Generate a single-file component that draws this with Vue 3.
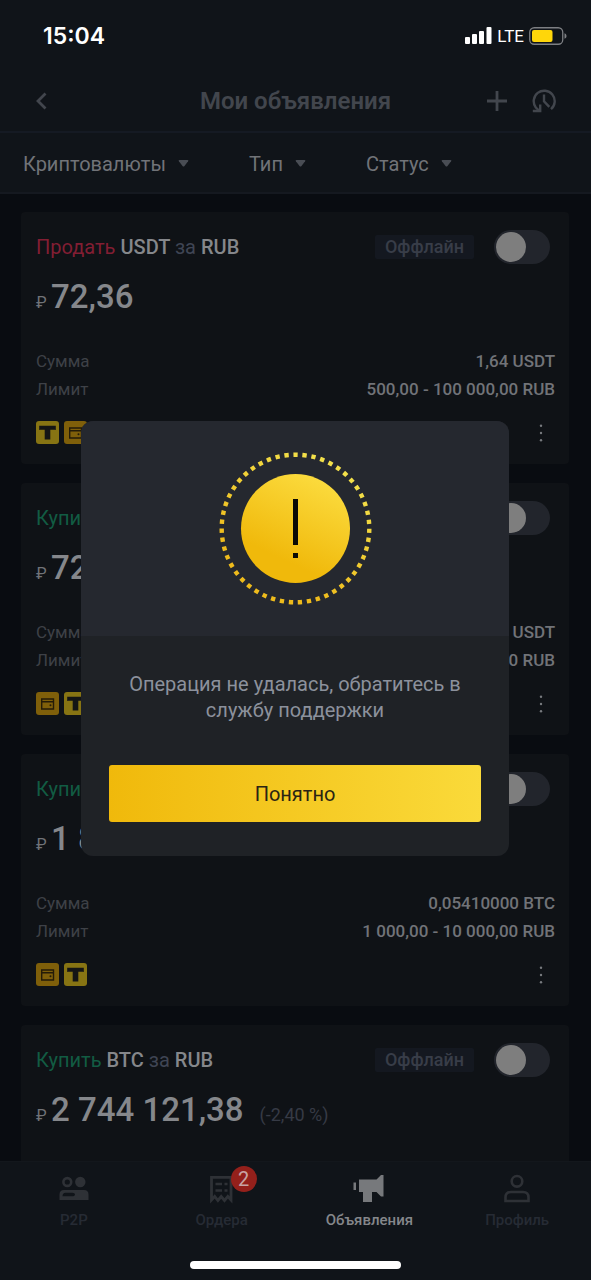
<script setup>
import { ref } from 'vue'

const filters = ['Криптовалюты', 'Тип', 'Статус']

const ads = ref([
  { id: 1, side: 'sell', action: 'Продать', coin: 'USDT', fiat: 'RUB', price: '72,36', amount: '1,64 USDT', limit: '500,00 - 100 000,00 RUB', pays: ['bank', 'wallet'], online: false },
  { id: 2, side: 'buy', action: 'Купить', coin: 'USDT', fiat: 'RUB', price: '72,36', amount: '1,64 USDT', limit: '500,00 - 100 000,00 RUB', pays: ['wallet', 'bank'], online: false },
  { id: 3, side: 'buy', action: 'Купить', coin: 'BTC', fiat: 'RUB', price: '1 850 000,00', amount: '0,05410000 BTC', limit: '1 000,00 - 10 000,00 RUB', pays: ['wallet', 'bank'], online: false },
  { id: 4, side: 'buy', action: 'Купить', coin: 'BTC', fiat: 'RUB', price: '2 744 121,38', diff: '(-2,40 %)', online: false },
])

const tabs = [
  { id: 'p2p', label: 'P2P' },
  { id: 'orders', label: 'Ордера', badge: 2 },
  { id: 'ads', label: 'Объявления', active: true },
  { id: 'profile', label: 'Профиль' },
]

const dialogOpen = ref(true)
</script>

<template>
  <div class="screen">
    <div class="status">
      <span class="clock">15:04</span>
      <div class="signals">
        <svg width="27" height="17" viewBox="0 0 27 17" fill="#fff" aria-hidden="true">
          <rect x="0" y="10" width="5" height="7" rx="1" />
          <rect x="7" y="7" width="5" height="10" rx="1" />
          <rect x="14" y="4" width="5" height="13" rx="1" />
          <rect x="21.500" y="0" width="5" height="17" rx="1" />
        </svg>
        <span class="net">LTE</span>
        <svg width="38" height="18" viewBox="0 0 38 18" aria-hidden="true">
          <rect x="0.750" y="0.750" width="33" height="16.500" rx="4.500" fill="none" stroke="#7d7f83" stroke-width="1.300" />
          <rect x="3" y="3" width="20.500" height="12" rx="2" fill="#ffd60a" />
          <path d="M35.500 6.200v5.600c1.300-.5 2-1.500 2-2.800s-.7-2.300-2-2.800z" fill="#7d7f83" />
        </svg>
      </div>
    </div>

    <header class="topbar">
      <button class="icon-btn" type="button" aria-label="Назад">
        <svg width="12" height="18" viewBox="0 0 12 18" fill="none" stroke="#42464d" stroke-width="2.800" aria-hidden="true">
          <path d="M10.500 1.500 3 9l7.500 7.500" />
        </svg>
      </button>
      <h1>Мои объявления</h1>
      <div class="tools">
        <button class="icon-btn" type="button" aria-label="Добавить">
          <svg width="22" height="22" viewBox="0 0 22 22" fill="none" stroke="#42464d" stroke-width="2.800" aria-hidden="true">
            <path d="M11 1v20M1 11h20" />
          </svg>
        </button>
        <button class="icon-btn" type="button" aria-label="История">
          <svg width="24" height="24" viewBox="0 0 24 24" fill="none" stroke="#42464d" stroke-width="2.400" aria-hidden="true">
            <path d="M19 20.200A10.500 10.500 0 1 0 3.800 18.500L7.500 22" />
            <path d="M8.200 15.500v6.500H.8" />
            <path d="M12 5.500v6.800l5.300 5.500" />
          </svg>
        </button>
      </div>
    </header>

    <div class="filters">
      <label v-for="name in filters" :key="name" class="filter">
        <select :aria-label="name">
          <option>{{ name }}</option>
        </select>
        <svg width="11" height="7" viewBox="0 0 11 7" aria-hidden="true"><path d="M1.500 0h8q1.500 0 .6 1.300L6.500 6q-1 1-2 0L.9 1.300Q0 0 1.500 0z" fill="#494d54" /></svg>
      </label>
    </div>

    <main class="list">
      <article v-for="ad in ads" :key="ad.id" class="card">
        <div class="head">
          <h2><span :class="ad.side">{{ ad.action }}</span> {{ ad.coin }} <span class="for">за</span> {{ ad.fiat }}</h2>
          <span class="state">Оффлайн</span>
          <input v-model="ad.online" class="switch" type="checkbox" role="switch" :aria-label="`${ad.action} ${ad.coin}`" />
        </div>
        <div class="price">
          <span class="cur">₽</span>
          <strong>{{ ad.price }}</strong>
          <span v-if="ad.diff" class="diff">{{ ad.diff }}</span>
        </div>
        <template v-if="ad.amount">
          <dl>
            <div><dt>Сумма</dt><dd>{{ ad.amount }}</dd></div>
            <div><dt>Лимит</dt><dd>{{ ad.limit }}</dd></div>
          </dl>
          <div class="foot">
            <template v-for="pay in ad.pays" :key="pay">
              <svg v-if="pay === 'bank'" width="23" height="23" viewBox="0 0 23 23" aria-hidden="true">
                <rect width="23" height="23" rx="3" fill="#877413" />
                <path d="M3.200 4.800h16.600v4.300l-1.200-.3H14.300v9.700H8.700V8.800H4.400l-1.200.3z" fill="#141515" />
              </svg>
              <svg v-else width="23" height="23" viewBox="0 0 23 23" aria-hidden="true">
                <rect width="23" height="23" rx="3" fill="#7f5f0a" />
                <path d="M5.700 7h11.800v10H5.700zM5.700 9.700h11.800" fill="none" stroke="#241b08" stroke-width="1.400" />
                <circle cx="14.500" cy="13.200" r="1" fill="#241b08" />
              </svg>
            </template>
            <button class="more" type="button" aria-label="Ещё">
              <svg width="4" height="18" viewBox="0 0 4 18" fill="#777a7e" aria-hidden="true">
                <circle cx="2" cy="1.700" r="1.200" /><circle cx="2" cy="9" r="1.200" /><circle cx="2" cy="16.300" r="1.200" />
              </svg>
            </button>
          </div>
        </template>
      </article>
    </main>

    <nav class="tabs">
      <a v-for="tab in tabs" :key="tab.id" :href="`#${tab.id}`" :class="{ active: tab.active }">
        <span class="glyph">
          <svg v-if="tab.id === 'p2p'" width="30" height="30" viewBox="0 0 30 30" fill="currentColor" aria-hidden="true">
            <circle cx="8.300" cy="8" r="3.900" fill="none" stroke="currentColor" stroke-width="2.600" />
            <circle cx="21.300" cy="8" r="5.200" />
            <path fill-rule="evenodd" d="M5 16h20q4.500 0 4.500 4.500V26H.5v-5.500Q.5 16 5 16zM6.500 18.800q-3 0-3 3.500h9.500q3 0 3-1.800 0-1.700-2.500-1.700z" />
          </svg>
          <svg v-else-if="tab.id === 'orders'" width="30" height="30" viewBox="0 0 30 30" fill="none" stroke="currentColor" stroke-width="2.800" aria-hidden="true">
            <path d="M4.500 26V3.400H24V26l-3.200-3.500-3.300 4-3.300-4-3.300 4-3.200-4z" />
            <path d="M8.500 10h6.500M8.500 16.500h6.500M17.500 10h3M17.500 16.500h3" stroke-width="2.400" />
          </svg>
          <svg v-else-if="tab.id === 'ads'" width="32" height="30" viewBox="0 0 32 30" fill="currentColor" aria-hidden="true">
            <path d="M.5 8.500H3V16H.5zM6 5.500h17.500L28 1h2.500v21.500H28L23.500 18H19v10h-9V18H6z" />
          </svg>
          <svg v-else width="30" height="30" viewBox="0 0 30 30" fill="none" stroke="currentColor" stroke-width="2.600" aria-hidden="true">
            <circle cx="15" cy="7.300" r="5.300" />
            <path d="M3.500 27v-3.500q0-5.500 5.500-5.500h12q5.500 0 5.500 5.500V27z" />
          </svg>
          <span v-if="tab.badge" class="badge">{{ tab.badge }}</span>
        </span>
        <span class="name">{{ tab.label }}</span>
      </a>
    </nav>
    <div class="home"></div>

    <div v-if="dialogOpen" class="overlay">
      <section class="dialog" role="alertdialog" aria-modal="true" aria-describedby="message">
        <div class="art">
          <svg width="154" height="154" viewBox="0 0 154 154" aria-hidden="true">
            <defs>
              <linearGradient id="gold" x1="0.300" y1="0.900" x2="0.700" y2="0.050">
                <stop offset="0.150" stop-color="#f0b90b" />
                <stop offset="1" stop-color="#fbda3c" />
              </linearGradient>
              <linearGradient id="ring" x1="0" y1="1" x2="0.600" y2="0">
                <stop offset="0.300" stop-color="#eebb1c" />
                <stop offset="1" stop-color="#f3e04a" />
              </linearGradient>
            </defs>
            <path d="M77.500 3.700a73.800 73.800 0 1 1 0 147.600a73.800 73.800 0 1 1 0-147.600" pathLength="459" fill="none" stroke="url(#ring)" stroke-width="4.400" stroke-dasharray="4.300 4.700" stroke-dashoffset="2.100" />
            <circle cx="77.500" cy="77.500" r="54.500" fill="url(#gold)" />
            <path d="M75 48h5v46h-5zM75 102h5v5h-5z" fill="#0b0a05" />
          </svg>
        </div>
        <div class="body">
          <p id="message">Операция не удалась, обратитесь в службу поддержки</p>
          <button type="button" @click="dialogOpen = false">Понятно</button>
        </div>
      </section>
    </div>
  </div>
</template>

<style>
body {
  margin: 0;
  background: #090c11;
}
</style>

<style scoped>
* {
  box-sizing: border-box;
}
.screen {
  position: relative;
  display: flex;
  flex-direction: column;
  height: 100vh;
  overflow: hidden;
  background: #090c11;
  color: #85878b;
  font-family: Roboto, "Noto Sans", sans-serif;
  font-size: 20px;
}
button {
  padding: 0;
  border: 0;
  background: none;
  font: inherit;
}
.status {
  display: flex;
  align-items: center;
  justify-content: space-between;
  height: 70px;
  padding: 1px 24px 0 43px;
  background: #101419;
}
.clock {
  color: #fff;
  font: 600 23px/28px Inter, sans-serif;
}
.signals {
  display: flex;
  align-items: center;
  gap: 5px;
}
.net {
  color: #fff;
  font-size: 17px;
  line-height: 20px;
}
.topbar {
  display: grid;
  grid-template-columns: 1fr auto 1fr;
  align-items: center;
  height: 63px;
  padding: 0 35px 0;
  border-bottom: 2px solid #151a23;
  background: #101419;
}
.icon-btn {
  display: flex;
  justify-self: start;
}
.topbar h1 {
  margin: 0;
  color: #42464d;
  font: 600 24px/30px Roboto, sans-serif;
}
.tools {
  display: flex;
  justify-self: end;
  align-items: center;
  gap: 24px;
}
.filters {
  display: flex;
  gap: 60px;
  height: 61px;
  padding: 2px 23px 0;
  border-bottom: 2px solid #151920;
  background: #101419;
}
.filter {
  display: flex;
  align-items: center;
  gap: 12px;
}
.filter select {
  padding: 0;
  border: 0;
  appearance: none;
  background: none;
  color: #717378;
  font: 20px/26px Roboto, sans-serif;
}
.list {
  display: flex;
  flex: 1;
  flex-direction: column;
  gap: 19px;
  min-height: 0;
  padding: 18px 22px 0 21px;
  overflow: hidden;
}
.card {
  flex: none;
  min-height: 252px;
  padding: 18px 14px 20px 15px;
  border-radius: 4px;
  background: #0f1216;
}
.head {
  display: flex;
  align-items: center;
  height: 34px;
}
.head h2 {
  flex: 1;
  margin: 0;
  color: #85878b;
  font-size: 20px;
  font-weight: 500;
  line-height: 26px;
}
.head h2 span {
  font-weight: 400;
}
.head .sell {
  color: #821e33;
}
.head .buy {
  color: #125c43;
}
.head .for {
  color: #3f4554;
}
.state {
  padding: 0 10px;
  border-radius: 2px;
  background: #141820;
  color: #383d48;
  font-size: 18px;
  font-weight: 500;
  line-height: 24px;
}
.switch {
  width: 56px;
  height: 34px;
  margin: 0 5px 0 20px;
  padding: 2px;
  border-radius: 17px;
  appearance: none;
  background: #22252c;
}
.switch::before {
  display: block;
  width: 30px;
  height: 30px;
  border-radius: 50%;
  background: #7e7e7e;
  content: "";
}
.switch:checked::before {
  margin-left: 22px;
}
.price {
  display: flex;
  align-items: baseline;
  height: 40px;
  margin-top: 13px;
  line-height: 40px;
}
.cur {
  width: 15px;
  color: #717378;
  font-size: 16px;
}
.price strong {
  color: #85878b;
  font-size: 33px;
  font-weight: 500;
}
.diff {
  margin-left: 16px;
  color: #363a45;
  font-size: 18px;
}
dl {
  margin: 30px 0 0;
}
dl div {
  display: flex;
  justify-content: space-between;
  line-height: 28px;
}
dt {
  color: #3e4147;
  font-size: 17px;
}
dd {
  margin: 0;
  color: #717378;
  font-size: 17px;
  font-weight: 500;
}
.foot {
  display: flex;
  align-items: center;
  gap: 5px;
  height: 23px;
  margin-top: 18px;
}
.more {
  display: flex;
  margin: 0 12px 0 auto;
}
.tabs {
  display: grid;
  grid-template-columns: repeat(4, 1fr);
  height: 100px;
  padding-top: 12px;
  border-top: 1px solid #13171c;
  background: #101419;
}
.tabs a {
  display: flex;
  flex-direction: column;
  align-items: center;
  gap: 6px;
  color: #2e3136;
  text-decoration: none;
}
.tabs a.active {
  color: #77797c;
}
.glyph {
  position: relative;
  display: flex;
}
.name {
  color: #262b34;
  font-size: 15px;
  font-weight: 500;
  line-height: 20px;
}
.active .name {
  color: #85878b;
}
.badge {
  position: absolute;
  top: -8px;
  left: 24px;
  width: 26px;
  height: 26px;
  border-radius: 50%;
  background: #94201b;
  color: #c8a4a4;
  font-size: 20px;
  line-height: 26px;
  text-align: center;
}
.home {
  height: 19px;
  background: #101419;
}
.home::before {
  display: block;
  width: 211px;
  height: 8px;
  margin: 0 auto;
  border-radius: 4px;
  background: #fff;
  content: "";
}
.overlay {
  position: absolute;
  inset: 0;
  display: flex;
  align-items: center;
  justify-content: center;
  padding: 0 82px 3px 81px;
}
.dialog {
  width: 100%;
  max-width: 428px;
  overflow: hidden;
  border-radius: 12px;
  background: #1f2226;
}
.art {
  display: flex;
  justify-content: center;
  padding: 30px 0 31px;
  background: #25282f;
}
.body {
  padding: 35px 28px 34px;
}
.body p {
  margin: 0 0 42px;
  color: #8c919c;
  font-size: 20px;
  line-height: 26px;
  text-align: center;
}
.body button {
  width: 100%;
  height: 57px;
  border-radius: 3px;
  background: linear-gradient(90deg, #f0b90b, #fada3a);
  color: #2a2413;
  font-size: 20px;
}
</style>
